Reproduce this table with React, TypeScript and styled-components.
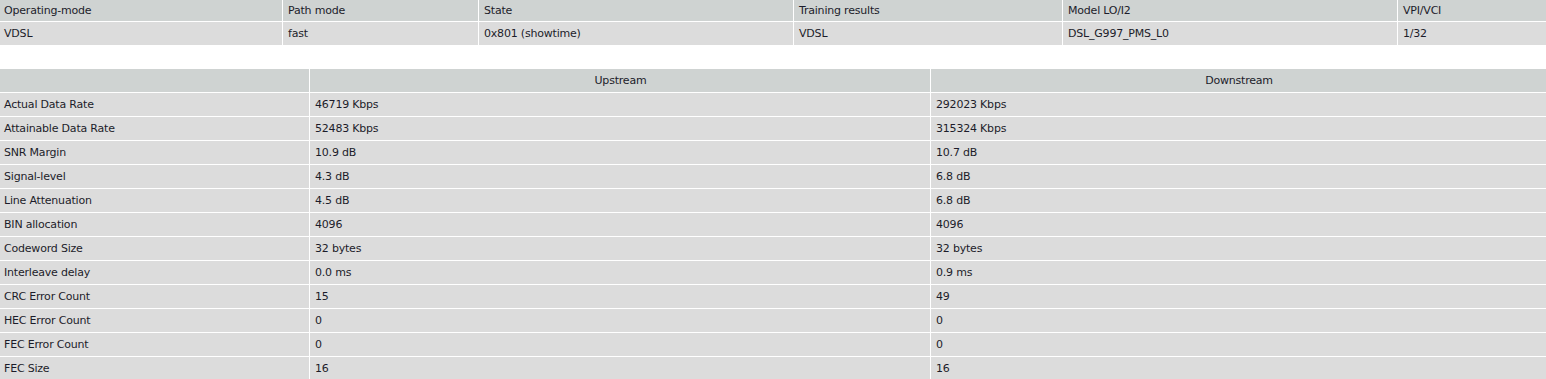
import React from "react";
import styled, { createGlobalStyle } from "styled-components";

const GlobalStyle = createGlobalStyle`
  html, body {
    margin: 0;
    padding: 0;
    background: #ffffff;
  }
  body {
    font-family: "DejaVu Sans", Verdana, sans-serif;
    font-size: 11px;
    color: #1c1c2a;
  }
`;

const Page = styled.div`
  display: flex;
  flex-direction: column;
  gap: 24px;
  width: 1546px;
`;

const Grid = styled.div<{ $cols: string }>`
  display: grid;
  grid-template-columns: ${(p) => p.$cols};
  gap: 1px;
  background: #ffffff;
`;

const Cell = styled.div<{ $head?: boolean; $center?: boolean; $short?: boolean }>`
  box-sizing: border-box;
  height: ${(p) => (p.$short ? "21px" : "23px")};
  line-height: ${(p) => (p.$short ? "21px" : "24px")};
  padding: 0 4px 0 5px;
  background: ${(p) => (p.$head ? "#cfd3d2" : "#dcdcdc")};
  text-align: ${(p) => (p.$center ? "center" : "left")};
  letter-spacing: -0.2px;
  white-space: nowrap;
  overflow: hidden;
`;

const FirstCell = styled(Cell)`
  padding-left: 4px;
`;

const statusHead = [
  "Operating-mode",
  "Path mode",
  "State",
  "Training results",
  "Model LO/I2",
  "VPI/VCI",
];
const statusRow = ["VDSL", "fast", "0x801 (showtime)", "VDSL", "DSL_G997_PMS_L0", "1/32"];

const lineRows: [string, string, string][] = [
  ["Actual Data Rate", "46719 Kbps", "292023 Kbps"],
  ["Attainable Data Rate", "52483 Kbps", "315324 Kbps"],
  ["SNR Margin", "10.9 dB", "10.7 dB"],
  ["Signal-level", "4.3 dB", "6.8 dB"],
  ["Line Attenuation", "4.5 dB", "6.8 dB"],
  ["BIN allocation", "4096", "4096"],
  ["Codeword Size", "32 bytes", "32 bytes"],
  ["Interleave delay", "0.0 ms", "0.9 ms"],
  ["CRC Error Count", "15", "49"],
  ["HEC Error Count", "0", "0"],
  ["FEC Error Count", "0", "0"],
  ["FEC Size", "16", "16"],
];

const App = () => (
  <Page>
    <GlobalStyle />
    <Grid $cols="282px 195px 314px 268px 334px 148px">
      {statusHead.map((h, i) =>
        i === 0 ? (
          <FirstCell key={h} $head $short>
            {h}
          </FirstCell>
        ) : (
          <Cell key={h} $head $short>
            {h}
          </Cell>
        )
      )}
      {statusRow.map((v, i) =>
        i === 0 ? (
          <FirstCell key={i}>{v}</FirstCell>
        ) : (
          <Cell key={i}>{v}</Cell>
        )
      )}
    </Grid>
    <Grid $cols="309px 620px 615px">
      <FirstCell $head />
      <Cell $head $center>
        Upstream
      </Cell>
      <Cell $head $center>
        Downstream
      </Cell>
      {lineRows.map(([label, up, down]) => (
        <React.Fragment key={label}>
          <FirstCell>{label}</FirstCell>
          <Cell>{up}</Cell>
          <Cell>{down}</Cell>
        </React.Fragment>
      ))}
    </Grid>
  </Page>
);

export default App;
